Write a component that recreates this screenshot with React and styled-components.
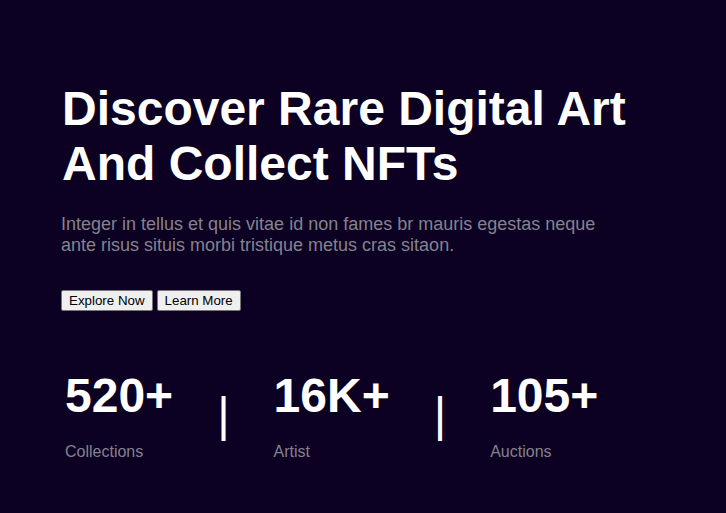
import React from "react";
import styled, { createGlobalStyle } from "styled-components";

const GlobalStyle = createGlobalStyle`
  html, body {
    margin: 0;
    padding: 0;
    background-color: #0c0122;
  }
  body {
    font-family: "Liberation Sans", Arial, sans-serif;
  }
`;

const Hero = styled.section`
  min-height: 513px;
  box-sizing: border-box;
  padding: 81px 0 0 62px;
  background-color: #0c0122;
`;

const Content = styled.div`
  width: 570px;
`;

const Title = styled.h1`
  margin: 0;
  font-size: 48px;
  font-weight: 700;
  color: #ffffff;
`;

const Lead = styled.p`
  margin: 23px 0 0 -1px;
  font-size: 18px;
  color: #85828f;
`;

const Actions = styled.div`
  margin: 34px 0 0 -1px;
  display: flex;
  gap: 4px;
`;

const Button = styled.button`
  font-family: "Liberation Sans", Arial, sans-serif;
  font-size: 13.333px;
  color: #000000;
  background-color: #efefef;
  border: 1px solid #767676;
  border-radius: 2px;
  padding: 2px 7px;
  cursor: pointer;
`;

const Stats = styled.div`
  margin: 57px 0 0 3px;
  display: flex;
  align-items: center;
  gap: 44px;
`;

const Stat = styled.div`
  display: flex;
  flex-direction: column;
`;

const Number = styled.span`
  font-size: 48px;
  font-weight: 700;
  color: #ffffff;
`;

const Label = styled.span`
  margin-top: 20px;
  font-size: 16px;
  color: #85828f;
`;

const Divider = styled.span`
  font-size: 48px;
  color: #ffffff;
`;

const stats = [
  { value: "520+", label: "Collections" },
  { value: "16K+", label: "Artist" },
  { value: "105+", label: "Auctions" },
];

function App() {
  return (
    <>
      <GlobalStyle />
      <Hero>
        <Content>
          <Title>Discover Rare Digital Art And Collect NFTs</Title>
          <Lead>
            Integer in tellus et quis vitae id non fames br mauris egestas neque
            ante risus situis morbi tristique metus cras sitaon.
          </Lead>
          <Actions>
            <Button>Explore Now</Button>
            <Button>Learn More</Button>
          </Actions>
        </Content>
        <Stats>
          {stats.map((s, i) => (
            <React.Fragment key={s.label}>
              {i > 0 && <Divider>|</Divider>}
              <Stat>
                <Number>{s.value}</Number>
                <Label>{s.label}</Label>
              </Stat>
            </React.Fragment>
          ))}
        </Stats>
      </Hero>
    </>
  );
}

export default App;
